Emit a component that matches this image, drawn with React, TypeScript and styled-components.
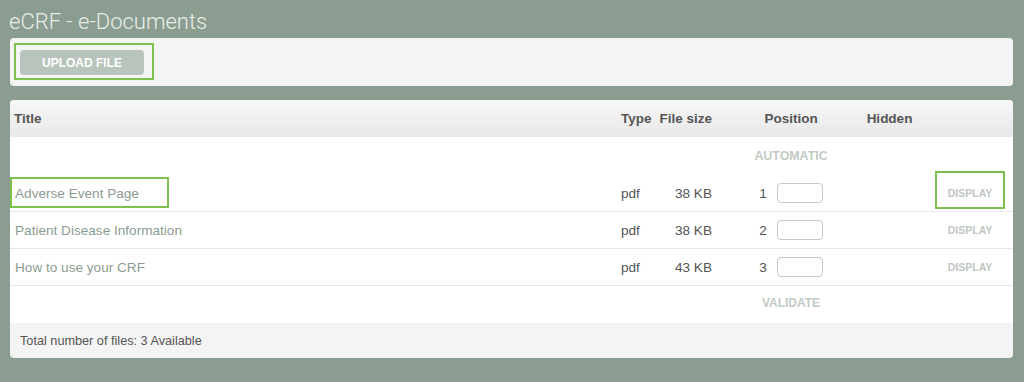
import * as React from 'react'
import styled, { createGlobalStyle } from 'styled-components'

const GlobalStyle = createGlobalStyle`
  html, body {
    margin: 0;
    padding: 0;
    background: #8b9d90;
  }
  body {
    font-family: "Liberation Sans", Arial, sans-serif;
  }
`

const Page = styled.div`
  width: 1024px;
  height: 382px;
  padding: 0 11px 0 10px;
  box-sizing: border-box;
  overflow: hidden;
`

const PageTitle = styled.h1`
  margin: 0 0 0 -1px;
  padding: 10px 0 0 0;
  height: 38px;
  box-sizing: border-box;
  font-family: Roboto, "Liberation Sans", sans-serif;
  font-weight: 300;
  font-size: 22px;
  line-height: 24px;
  color: #e9eeea;
`

const Panel = styled.div`
  background: #f4f4f4;
  border-radius: 4px;
  overflow: hidden;
`

const Toolbar = styled(Panel)`
  height: 48px;
  padding: 5px 4px;
  box-sizing: border-box;
  margin-bottom: 14px;
`

const Highlight = styled.div`
  display: inline-flex;
  border: 2px solid #7fc14f;
  padding: 5px 8px 3px 4px;
`

const UploadButton = styled.button`
  width: 124px;
  height: 25px;
  border: none;
  border-radius: 4px;
  background: #b9c5bc;
  color: #ffffff;
  font-family: "Liberation Sans", Arial, sans-serif;
  font-weight: 700;
  font-size: 12px;
  padding: 0;
`

const COLUMNS = '607px 40px 79px 110px 87px 80px'

const HeaderRow = styled.div`
  display: grid;
  grid-template-columns: ${COLUMNS};
  height: 37px;
  background: linear-gradient(#f8f8f8, #e8e8e8);
  color: #555555;
  font-weight: 700;
  font-size: 13.5px;
`

const Cell = styled.div<{ $align?: 'left' | 'center' | 'right' }>`
  position: relative;
  display: flex;
  align-items: center;
  justify-content: ${p => (p.$align === 'right' ? 'flex-end' : p.$align === 'center' ? 'center' : 'flex-start')};
  padding: ${p => (p.$align === 'right' ? '0 24px 0 0' : p.$align === 'center' ? '0' : '0 0 0 4px')};
`

const Body = styled.div`
  background: #ffffff;
`

const Row = styled.div<{ $line?: boolean }>`
  display: grid;
  grid-template-columns: ${COLUMNS};
  height: 37px;
  box-sizing: border-box;
  border-bottom: ${p => (p.$line ? '1px solid #e6e6e6' : 'none')};
  font-size: 13.6px;
  color: #555555;
`

const AutoRow = styled(Row)`
  height: 38px;
`

const ValidateRow = styled(Row)`
  padding-bottom: 3px;
`

const Marker = styled.div<{ $left: number; $top: number; $width: number; $height: number }>`
  position: absolute;
  left: ${p => p.$left}px;
  top: ${p => p.$top}px;
  width: ${p => p.$width}px;
  height: ${p => p.$height}px;
  box-sizing: border-box;
  border: 2px solid #7fc14f;
  pointer-events: none;
`

const DocLink = styled.span`
  color: #8b9d90;
  padding-left: 1px;
`

const SmallAction = styled.span<{ $size: number }>`
  color: #c1cbc3;
  font-weight: 700;
  font-size: ${p => p.$size}px;
`

const DisplayLink = styled.span`
  color: #c0c7c2;
  font-weight: 700;
  font-size: 10.5px;
  margin-left: -6px;
`

const PositionBox = styled.div`
  display: flex;
  align-items: center;
  gap: 10px;
`

const PositionInput = styled.input`
  width: 46px;
  height: 20px;
  box-sizing: border-box;
  border: 1px solid #c8c8c8;
  border-radius: 4px;
  background: #ffffff;
  padding: 0;
`

const Footer = styled.div`
  height: 35px;
  display: flex;
  align-items: center;
  padding-left: 10px;
  font-size: 12.7px;
  color: #555555;
`

const docs = [
  { title: 'Adverse Event Page', type: 'pdf', size: '38 KB', position: 1 },
  { title: 'Patient Disease Information', type: 'pdf', size: '38 KB', position: 2 },
  { title: 'How to use your CRF', type: 'pdf', size: '43 KB', position: 3 },
]

export default function App() {
  return (
    <Page>
      <GlobalStyle />
      <PageTitle>eCRF - e-Documents</PageTitle>
      <Toolbar>
        <Highlight>
          <UploadButton>UPLOAD FILE</UploadButton>
        </Highlight>
      </Toolbar>
      <Panel>
        <HeaderRow>
          <Cell>Title</Cell>
          <Cell>Type</Cell>
          <Cell $align="right">File size</Cell>
          <Cell $align="center">Position</Cell>
          <Cell $align="center">Hidden</Cell>
          <Cell />
        </HeaderRow>
        <Body>
          <AutoRow>
            <Cell />
            <Cell />
            <Cell />
            <Cell $align="center">
              <SmallAction $size={12.4}>AUTOMATIC</SmallAction>
            </Cell>
            <Cell />
            <Cell />
          </AutoRow>
          {docs.map((d, i) => (
            <Row key={d.title} $line>
              <Cell>
                <DocLink>{d.title}</DocLink>
                {i === 0 && <Marker $left={0} $top={2} $width={159} $height={31} />}
              </Cell>
              <Cell>{d.type}</Cell>
              <Cell $align="right">{d.size}</Cell>
              <Cell $align="center">
                <PositionBox>
                  <span>{d.position}</span>
                  <PositionInput type="text" />
                </PositionBox>
              </Cell>
              <Cell />
              <Cell $align="center">
                <DisplayLink>DISPLAY</DisplayLink>
                {i === 0 && <Marker $left={2} $top={-4} $width={70} $height={38} />}
              </Cell>
            </Row>
          ))}
          <ValidateRow>
            <Cell />
            <Cell />
            <Cell />
            <Cell $align="center">
              <SmallAction $size={12}>VALIDATE</SmallAction>
            </Cell>
            <Cell />
            <Cell />
          </ValidateRow>
        </Body>
        <Footer>Total number of files: 3 Available</Footer>
      </Panel>
    </Page>
  )
}
